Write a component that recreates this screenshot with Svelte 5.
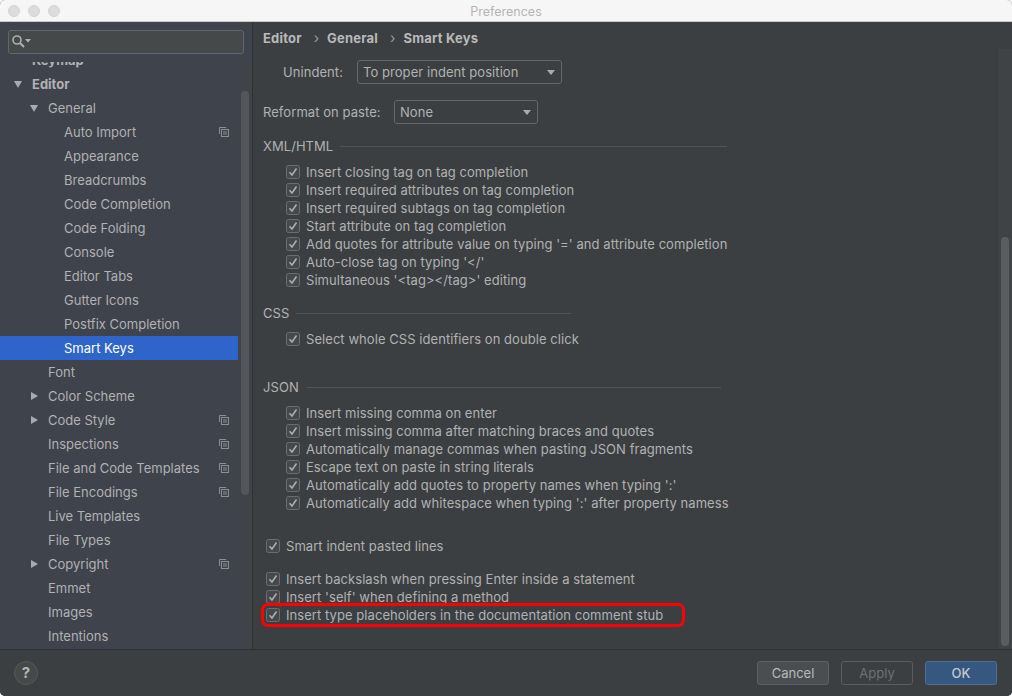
<script>
  const tree = [
    { label: 'Keymap', depth: 1, bold: true },
    { label: 'Editor', depth: 1, bold: true, open: true },
    { label: 'General', depth: 2, open: true },
    { label: 'Auto Import', depth: 3, copy: true },
    { label: 'Appearance', depth: 3 },
    { label: 'Breadcrumbs', depth: 3 },
    { label: 'Code Completion', depth: 3 },
    { label: 'Code Folding', depth: 3 },
    { label: 'Console', depth: 3 },
    { label: 'Editor Tabs', depth: 3 },
    { label: 'Gutter Icons', depth: 3 },
    { label: 'Postfix Completion', depth: 3 },
    { label: 'Smart Keys', depth: 3, selected: true },
    { label: 'Font', depth: 2 },
    { label: 'Color Scheme', depth: 2, closed: true },
    { label: 'Code Style', depth: 2, closed: true, copy: true },
    { label: 'Inspections', depth: 2, copy: true },
    { label: 'File and Code Templates', depth: 2, copy: true },
    { label: 'File Encodings', depth: 2, copy: true },
    { label: 'Live Templates', depth: 2 },
    { label: 'File Types', depth: 2 },
    { label: 'Copyright', depth: 2, closed: true, copy: true },
    { label: 'Emmet', depth: 2 },
    { label: 'Images', depth: 2 },
    { label: 'Intentions', depth: 2 }
  ];
  const xml = [
    'Insert closing tag on tag completion',
    'Insert required attributes on tag completion',
    'Insert required subtags on tag completion',
    'Start attribute on tag completion',
    "Add quotes for attribute value on typing '=' and attribute completion",
    "Auto-close tag on typing '</'",
    "Simultaneous '<tag></tag>' editing"
  ];
  const json = [
    'Insert missing comma on enter',
    'Insert missing comma after matching braces and quotes',
    'Automatically manage commas when pasting JSON fragments',
    'Escape text on paste in string literals',
    "Automatically add quotes to property names when typing ':'",
    "Automatically add whitespace when typing ':' after property namess"
  ];
</script>

{#snippet check(text, boxed = false)}
  <label class="check" class:boxed>
    <svg class="box" width="14" height="14" viewBox="0 0 14 14" aria-hidden="true">
      <rect x="0.5" y="0.5" width="13" height="13" rx="2" fill="#45494b" stroke="#6b6e70" />
      <path d="M3.5 7.2 L6 10 L10.5 3.5" fill="none" stroke="#aeb0b1" stroke-width="1.5" />
    </svg>
    <span>{text}</span>
  </label>
{/snippet}

{#snippet combo(text, width)}
  <div class="combo" style="width:{width}px">
    <span>{text}</span>
    <i class="caret"></i>
  </div>
{/snippet}

<div class="window">
  <header class="titlebar">
    <div class="lights"><i></i><i></i><i></i></div>
    <div class="title">Preferences</div>
  </header>

  <div class="body">
    <aside class="sidebar">
      <div class="search">
        <svg width="20" height="14" viewBox="0 0 20 14" aria-hidden="true">
          <circle cx="5" cy="6" r="4" fill="none" stroke="#aeb0b1" stroke-width="1.6" />
          <path d="M8 9 L12 13" stroke="#aeb0b1" stroke-width="2.2" />
          <path d="M13 5 H19 L16 8.5 Z" fill="#aeb0b1" />
        </svg>
      </div>
      <div class="tree-wrap">
        <div class="track"><div class="thumb"></div></div>
        <ul class="tree">
          {#each tree as n}
            <li class="row d{n.depth}" class:bold={n.bold} class:selected={n.selected}>
              {#if n.open}
                <i class="arrow-down"></i>
              {:else if n.closed}
                <i class="arrow-right"></i>
              {/if}
              <span>{n.label}</span>
              {#if n.copy}
                <svg class="copy" width="10" height="10" viewBox="0 0 10 10" aria-hidden="true">
                  <path d="M0.5 7 V0.5 H7" fill="none" stroke="#8c8f92" />
                  <rect x="2.5" y="2.5" width="7" height="7" fill="none" stroke="#8c8f92" />
                  <path d="M4 5 H8 M4 7 H8" stroke="#8c8f92" />
                </svg>
              {/if}
            </li>
          {/each}
        </ul>
      </div>
    </aside>

    <main class="content">
      <nav class="crumbs">
        <b>Editor</b><em>›</em><b>General</b><em>›</em><b>Smart Keys</b>
      </nav>
      <div class="track-r"><div class="thumb-r"></div></div>

      <div class="panel">
        <div class="field f1"><span>Unindent:</span>{@render combo('To proper indent position', 205)}</div>
        <div class="field f2"><span>Reformat on paste:</span>{@render combo('None', 144)}</div>

        <div class="section s-xml"><span>XML/HTML</span><hr /></div>
        <div class="group">{#each xml as t}{@render check(t)}{/each}</div>

        <div class="section s-css"><span>CSS</span><hr /></div>
        <div class="group">{@render check('Select whole CSS identifiers on double click')}</div>

        <div class="section s-json"><span>JSON</span><hr /></div>
        <div class="group">{#each json as t}{@render check(t)}{/each}</div>

        <div class="lone">{@render check('Smart indent pasted lines', true)}</div>
        <div class="py">
          {@render check('Insert backslash when pressing Enter inside a statement', true)}
          {@render check("Insert 'self' when defining a method", true)}
          <div class="marked">
            {@render check('Insert type placeholders in the documentation comment stub', true)}
            <div class="redbox"></div>
          </div>
        </div>
      </div>
    </main>
  </div>

  <footer class="footer">
    <div class="help">?</div>
    <div class="buttons">
      <button class="btn">Cancel</button>
      <button class="btn disabled">Apply</button>
      <button class="btn ok">OK</button>
    </div>
  </footer>
</div>

<style>
  :global(body) { margin: 0; background: #fff; }
  * { box-sizing: border-box; }
  .window {
    width: 1012px; height: 696px; display: flex; flex-direction: column; overflow: hidden;
    border-radius: 5px; background: #3c3f41;
    font: 13px/18px Inter, "Liberation Sans", sans-serif; color: #b0b2b3;
  }
  .titlebar {
    height: 22px; flex: none; background: #f6f6f6; border-bottom: 1px solid #c9c9c9;
    position: relative; display: flex; align-items: center; justify-content: center;
  }
  .lights { position: absolute; left: 8px; top: 5px; display: flex; gap: 8px; }
  .lights i { width: 12px; height: 12px; border-radius: 50%; background: #dcdcdc; border: 1px solid #d3d3d3; }
  .title { color: #b5b5b5; font-size: 12.5px; padding-top: 2px; }
  .body { flex: 1; display: flex; min-height: 0; }
  .sidebar {
    width: 253px; flex: none; background: #3f434b; border-right: 1px solid #2f3234;
    display: flex; flex-direction: column;
  }
  .search {
    margin: 8px 8px 0; width: 236px; height: 24px; flex: none; border: 1px solid #63666a; border-radius: 3px;
    background: #45494a; padding: 3px 3px; display: flex;
  }
  .tree-wrap { flex: 1; margin-top: 8px; position: relative; overflow: hidden; }
  .track { position: absolute; right: 0; top: 0; bottom: 0; width: 14px; background: #40444a; }
  .thumb { position: absolute; left: 3px; top: 29px; width: 8px; height: 404px; border-radius: 4px; background: #53575a; }
  .tree { list-style: none; margin: -14px 14px 0 0; padding: 0; }
  .row { height: 24px; display: flex; align-items: center; position: relative; white-space: nowrap; }
  .row.d1 { padding-left: 32px; }
  .row.d2 { padding-left: 48px; }
  .row.d3 { padding-left: 64px; }
  .bold { font-weight: 700; }
  .selected { background: #2f65ca; color: #fff; }
  .arrow-down, .arrow-right { position: absolute; width: 0; height: 0; border-style: solid; border-color: transparent; }
  .arrow-down { top: 9px; border-width: 7px 4.5px 0; border-top-color: #a9abad; }
  .d1 .arrow-down { left: 14px; }
  .d2 .arrow-down { left: 30px; }
  .arrow-right { left: 31px; top: 8px; border-width: 4.5px 0 4.5px 7px; border-left-color: #a9abad; }
  .copy { position: absolute; left: 219px; top: 7px; }

  .content { flex: 1; min-width: 0; position: relative; overflow: hidden; }
  .crumbs { height: 32px; padding: 0 0 0 10px; display: flex; align-items: center; }
  .crumbs b { font-weight: 700; color: #b8babb; letter-spacing: 0.2px; }
  .crumbs em { font-style: normal; margin: 0 8px 0 12px; color: #9a9c9e; font-size: 14px; }
  .track-r { position: absolute; right: 0; top: 27px; bottom: 0; width: 14px; background: #3f4345; }
  .thumb-r { position: absolute; left: 3px; top: 188px; bottom: 3px; width: 8px; border-radius: 4px; background: #5a5d5f; }
  .panel { padding-left: 10px; letter-spacing: 0.06px; }
  .field { display: flex; align-items: center; height: 24px; }
  .f1 { margin-top: 6px; padding-left: 20px; }
  .f1 > span { width: 74px; }
  .f2 { margin-top: 16px; }
  .f2 > span { width: 131px; }
  .combo {
    height: 24px; border: 1px solid #63666a; border-radius: 3px; padding: 0 5px;
    display: flex; align-items: center; justify-content: space-between; background: #3c3f41;
  }
  .caret { width: 0; height: 0; margin-right: 1px; border-style: solid; border-color: transparent; border-width: 5px 4.5px 0; border-top-color: #a9abad; }
  .section { display: flex; align-items: center; gap: 7px; height: 18px; }
  .section hr { flex: 1; margin: 0; border: 0; border-top: 1px solid #515456; }
  .s-xml { margin-top: 13px; width: 464px; }
  .s-css { margin-top: 15px; width: 308px; }
  .s-json { margin-top: 30px; width: 458px; }
  .group { margin-top: 8px; padding-left: 23px; }
  .check { display: flex; align-items: center; height: 18px; gap: 6px; white-space: nowrap; }
  .check.boxed { margin-left: 3px; }
  .box { flex: none; }
  .lone { margin-top: 25px; }
  .py { margin-top: 15px; }
  .marked { position: relative; }
  .redbox {
    position: absolute; left: -2px; top: -3px; width: 424px; height: 24px;
    border: 3px solid #f00; border-radius: 7px;
  }
  .footer {
    height: 47px; flex: none; border-top: 1px solid #2f3234; background: #3c3f41;
    display: flex; align-items: center; justify-content: space-between; padding: 0 15px 0 14px;
  }
  .help {
    width: 24px; height: 24px; border-radius: 50%; background: #45494a; border: 1px solid #56595b;
    display: flex; align-items: center; justify-content: center; font-weight: 700; font-size: 15px; color: #b4b6b7;
  }
  .buttons { display: flex; gap: 12px; }
  .btn {
    width: 72px; height: 24px; border: 1px solid #5e6163; border-radius: 3px; background: #4a4e50;
    color: #b8babb; font: inherit; padding: 0;
  }
  .btn.disabled { background: #3c3f41; color: #6e7173; border-color: #5a5d5f; }
  .btn.ok { background: #365880; border-color: #4c7096; color: #c4c8cc; font-weight: 500; }
</style>
